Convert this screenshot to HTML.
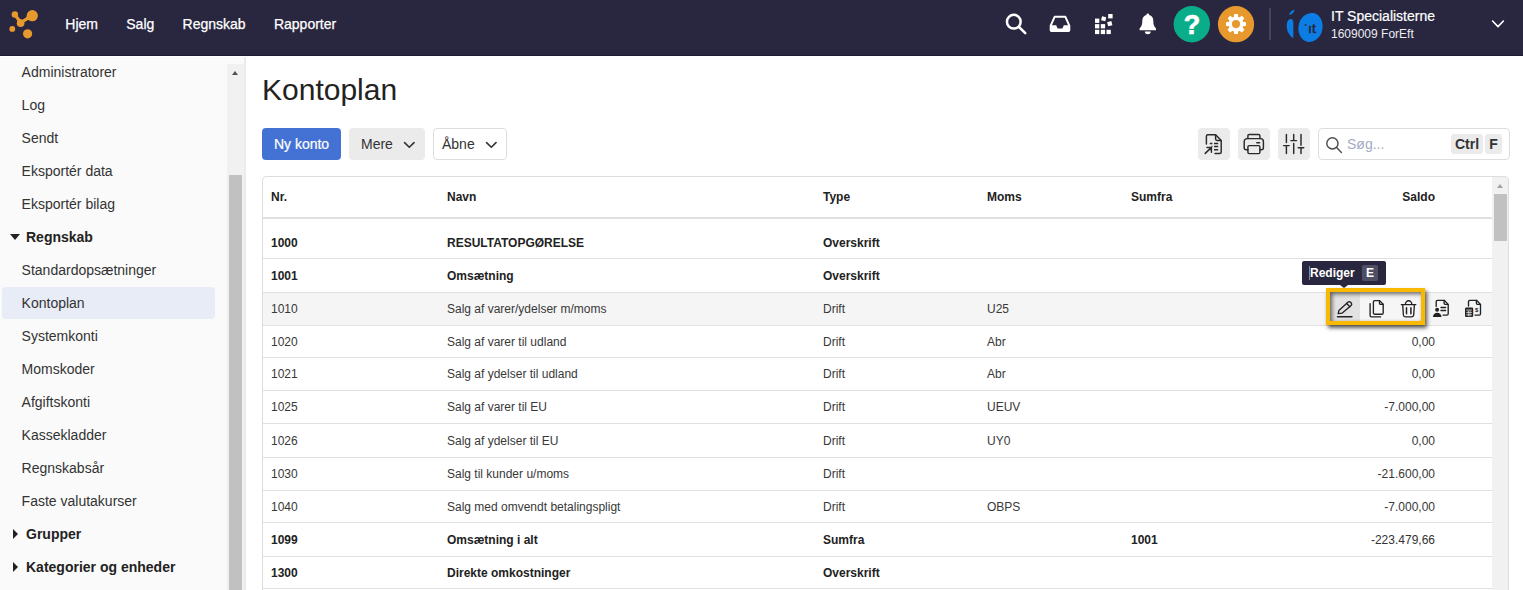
<!DOCTYPE html>
<html lang="da">
<head>
<meta charset="utf-8">
<title>Kontoplan</title>
<style>
*{box-sizing:border-box;margin:0;padding:0}
html,body{width:1523px;height:590px;overflow:hidden;background:#fff}
body{font-family:"Liberation Sans",Arial,sans-serif;font-size:14px;color:#333;position:relative}
.abs{position:absolute}
/* NAVBAR */
#nav{position:absolute;left:0;top:0;width:1523px;height:56px;background:#29273f;border-bottom:1px solid #1d1b30}
#nav .menu{position:absolute;top:0;left:51.2px;height:48px;display:flex}
#nav .menu a{color:#fff;font-size:14px;line-height:48px;padding:0 14.15px;text-decoration:none;-webkit-text-stroke:.25px #fff}
#nav svg{position:absolute}
.circ{position:absolute;width:36px;height:36px;border-radius:50%;top:6px}
.divider{position:absolute;left:1269px;top:8px;width:2px;height:32px;background:#454359}
.uname{position:absolute;left:1331px;top:8px;font-size:14px;line-height:16px;color:#fff;white-space:nowrap;-webkit-text-stroke:.2px #fff}
.usub{position:absolute;left:1331px;top:27px;font-size:12px;line-height:14px;color:#ececf1;white-space:nowrap}
/* SIDEBAR */
#side{position:absolute;left:0;top:57px;width:246px;height:533px;background:#fafafa;border-right:2px solid #ebebeb}
#side .track{position:absolute;left:227px;top:7px;width:17px;height:526px;background:#f1f1f1}
#side .thumb{position:absolute;left:229px;top:118px;width:13px;height:416px;background:#c1c1c1}
#side .it{margin-top:-1px;position:absolute;left:2px;width:213px;height:32px;line-height:32px;padding-left:19.6px;font-size:14px;color:#333;border-radius:4px;white-space:nowrap}
#side .it.b{font-weight:bold;color:#222;padding-left:24px}
#side .it.sel{background:#e8ecf6}
.tri{position:absolute;width:0;height:0}
/* MAIN */
h1{position:absolute;left:262px;top:73px;font-size:30px;font-weight:normal;line-height:34px;color:#222;white-space:nowrap}
.btn{position:absolute;top:128px;height:32px;border-radius:4px;font-size:14px;line-height:32px;white-space:nowrap;color:#333}
.ibtn{position:absolute;top:128px;width:32px;height:32px;border-radius:4px;background:#ebebeb}
.ibtn svg{position:absolute;left:4px;top:4px}
#search{position:absolute;left:1318px;top:128px;width:192px;height:32px;border:1px solid #ddd;border-radius:4px;background:#fff}
#search .ph{position:absolute;left:28px;top:0;line-height:30px;font-size:14px;color:#a3abc4}
kbd{position:absolute;font-family:inherit;font-weight:bold;font-size:14px;line-height:20px;height:20px;background:#ebebeb;border-radius:3px;color:#333;text-align:center}
/* TABLE */
#tbl{position:absolute;left:262px;top:176px;width:1247px;height:420px;border:1px solid #ddd;border-radius:4px;background:#fff;overflow:hidden}
.row{position:absolute;left:0;width:1229px;font-size:12px;color:#383838;border-bottom:1px solid #e0e0e0}
.row span{position:absolute;white-space:nowrap;line-height:14px}
.row.b{font-weight:bold;color:#222}
.row.hov{background:#f5f5f5}
.c1{left:8px}.c2{left:184px}.c3{left:560px}.c4{left:724px}.c5{left:868px}.c6{right:57px;text-align:right}
#hl{position:absolute;left:1326px;top:288px;width:99px;height:37px;background:#f9b900;box-shadow:2px 3px 4px rgba(0,0,0,.65)}
#hlin{position:absolute;left:1330px;top:292px;width:91px;height:29px;box-shadow:inset 2px 2px 4px rgba(0,0,0,.6)}
#tip{position:absolute;left:1302px;top:261px;width:84px;height:24px;border-radius:2px;background:#29273f;color:#fff;font-weight:bold;font-size:12px;line-height:24px;padding-left:8px;white-space:nowrap}
#tip i{position:absolute;left:7px;top:5px;width:1px;height:14px;background:rgba(255,255,255,.45)}
#tip span{position:absolute;left:60px;top:4px;width:16px;height:16px;line-height:16px;text-align:center;background:#504e64;border-radius:2px}
</style>
</head>
<body>
<div id="nav">
  <svg style="left:8px;top:8px" width="32" height="32" viewBox="8 8 32 32">
    <g fill="#e8992e">
      <circle cx="14.85" cy="14.5" r="3.2"/><circle cx="32.3" cy="15.7" r="5.6"/><circle cx="20.6" cy="23.3" r="3.8"/>
      <circle cx="12.3" cy="28.9" r="2.9"/><circle cx="27.6" cy="33.8" r="4.6"/>
      <path d="M14.85 14.5 L20.6 22.6 L32.3 15.7" fill="none" stroke="#e8992e" stroke-width="3.1" stroke-linejoin="round"/>
      <path d="M17.2 16.4 Q19 19 22 19.6 L20 21Z M24.5 19.5 Q26.5 18.5 27 15.5 L29 18Z"/>
    </g>
  </svg>
  <div class="menu"><a>Hjem</a><a>Salg</a><a>Regnskab</a><a>Rapporter</a></div>
  <!-- nav icons -->
  <svg style="left:1000px;top:0" width="270" height="56" viewBox="1000 0 270 56">
    <g fill="none" stroke="#fff" stroke-linecap="round">
      <circle cx="1013.8" cy="21.7" r="6.85" stroke-width="2.5"/><path d="M1019 27 L1025.3 33.2" stroke-width="2.5"/>
    </g>
    <!-- inbox -->
    <path d="M1054.6 16.8 H1065.4 L1069.3 25.6 V30 A1.1 1.1 0 0 1 1068.2 31.1 H1051.8 A1.1 1.1 0 0 1 1050.7 30 V25.6 Z" fill="none" stroke="#fff" stroke-width="2" stroke-linejoin="round"/>
    <path d="M1050.7 25.3 H1056.2 L1057.6 28.5 H1062.4 L1063.8 25.3 H1069.3 V31 H1050.7Z" fill="#fff"/>
    <!-- grid -->
    <g fill="#fff">
      <rect x="1095" y="18.6" width="4.3" height="4.3"/><rect x="1095" y="24.1" width="4.3" height="4.3"/><rect x="1095" y="29.8" width="4.3" height="4.3"/>
      <rect x="1100.8" y="24.1" width="4.3" height="4.3"/><rect x="1100.8" y="29.8" width="4.3" height="4.3"/>
      <rect x="1106.5" y="29.8" width="4.3" height="4.3"/>
      <rect x="1101.5" y="16.6" width="4.3" height="4.3" transform="rotate(14 1103.6 18.8)"/>
      <rect x="1108.2" y="14" width="4.4" height="4.4"/>
      <rect x="1107.6" y="21.6" width="4.3" height="4.3" transform="rotate(-15 1109.7 23.7)"/>
    </g>
    <!-- bell -->
    <g fill="#fff">
      <path d="M1147.8 13.4 C1148.7 13.4 1149.2 14 1149.2 15 C1151.8 15.7 1153.3 18 1153.3 20.8 C1153.3 25 1154.2 26.8 1156 28.4 V30.3 H1139.6 V28.4 C1141.4 26.8 1142.3 25 1142.3 20.8 C1142.3 18 1143.8 15.7 1146.4 15 C1146.4 14 1146.9 13.4 1147.8 13.4Z"/>
      <path d="M1144.9 31.6 H1150.7 A2.9 2.6 0 0 1 1144.9 31.6Z"/>
    </g>
    <circle cx="1191.8" cy="24.2" r="18.2" fill="#0aad8a"/>
    <text x="1191.9" y="34.2" font-size="27" font-weight="bold" text-anchor="middle" fill="#fff" stroke="#fff" stroke-width=".7" font-family="Liberation Sans, sans-serif">?</text>
    <circle cx="1236" cy="24.2" r="18.1" fill="#e8992e"/>
    <g fill="#fff" transform="translate(1236 24.1)"><circle r="7.7"/><g id="tt"><rect x="-2" y="-10" width="4" height="20" rx=".6"/></g><use href="#tt" transform="rotate(45)"/><use href="#tt" transform="rotate(90)"/><use href="#tt" transform="rotate(135)"/><circle r="4.05" fill="#e8992e"/></g>
  </svg>
  <div class="divider"></div>
  <!-- company logo -->
  <svg style="left:1284px;top:8px" width="42" height="36" viewBox="1284 8 42 36">
    <g fill="#0d7de6">
      <ellipse cx="1310.5" cy="27.4" rx="12" ry="14.6" transform="rotate(12 1310.5 27.4)"/>
      <path d="M1293.3 38.3 C1289.4 35.6 1286.7 31 1286.7 26 C1286.7 22 1288.4 19.3 1290.6 19.1 C1292.6 19.1 1293.3 20.8 1293.3 23Z"/>
      <path d="M1288.9 15.1 C1289.6 12.6 1291.6 10.6 1294.4 9.6 C1294.4 12.4 1292.4 14.4 1288.9 15.1Z"/>
    </g>
    <text x="1308" y="32.7" font-size="13" text-anchor="start" fill="#29273f" stroke="#29273f" stroke-width=".55" font-family="Liberation Sans, sans-serif" textLength="7.8" lengthAdjust="spacingAndGlyphs">ıt</text>
    <circle cx="1305.6" cy="24.9" r="0.95" fill="#29273f"/>
  </svg>
  <div class="uname">IT Specialisterne</div>
  <div class="usub">1609009 ForEft</div>
  <svg style="left:1491px;top:19px" width="14" height="10" viewBox="0 0 14 10" fill="none" stroke="#fff" stroke-width="1.6" stroke-linecap="round" stroke-linejoin="round"><path d="M1.6 2 L7 7.6 L12.4 2"/></svg>
</div>

<div id="side">
  <div class="track"></div><div class="thumb"></div>
  <div class="tri" style="left:231.8px;top:13.8px;border-left:3.7px solid transparent;border-right:3.7px solid transparent;border-bottom:4.3px solid #505050"></div>
  <div class="it" style="top:0px">Administratorer</div>
  <div class="it" style="top:33px">Log</div>
  <div class="it" style="top:66px">Sendt</div>
  <div class="it" style="top:99px">Eksportér data</div>
  <div class="it" style="top:132px">Eksportér bilag</div>
  <div class="it b" style="top:165px">Regnskab</div>
  <div class="tri" style="left:10.4px;top:177px;border-left:5.2px solid transparent;border-right:5.2px solid transparent;border-top:6.4px solid #222"></div>
  <div class="it" style="top:198px">Standardopsætninger</div>
  <div class="it sel" style="top:231px">Kontoplan</div>
  <div class="it" style="top:264px">Systemkonti</div>
  <div class="it" style="top:297px">Momskoder</div>
  <div class="it" style="top:330px">Afgiftskonti</div>
  <div class="it" style="top:363px">Kassekladder</div>
  <div class="it" style="top:396px">Regnskabsår</div>
  <div class="it" style="top:429px">Faste valutakurser</div>
  <div class="it b" style="top:462px">Grupper</div>
  <div class="tri" style="left:12.8px;top:472px;border-top:5px solid transparent;border-bottom:5px solid transparent;border-left:5.6px solid #222"></div>
  <div class="it b" style="top:495px">Kategorier og enheder</div>
  <div class="tri" style="left:12.8px;top:505px;border-top:5px solid transparent;border-bottom:5px solid transparent;border-left:5.6px solid #222"></div>
</div>

<h1>Kontoplan</h1>
<div class="btn" style="left:262px;width:79px;background:#4472d4;color:#fff;text-align:center;-webkit-text-stroke:.2px #fff">Ny konto</div>
<div class="btn" style="left:349px;width:76px;background:#ebebeb;padding-left:12px">Mere<svg class="abs" style="left:53.6px;top:12.6px" width="12.6" height="8.4" viewBox="0 0 12 8" fill="none" stroke="#333" stroke-width="1.5" stroke-linecap="round" stroke-linejoin="round"><path d="M1.5 1.5 L6 6 L10.5 1.5"/></svg></div>
<div class="btn" style="left:433px;width:74px;background:#fff;border:1px solid #ddd;line-height:30px;padding-left:8px">Åbne<svg class="abs" style="left:50.8px;top:11.6px" width="12.6" height="8.4" viewBox="0 0 12 8" fill="none" stroke="#333" stroke-width="1.5" stroke-linecap="round" stroke-linejoin="round"><path d="M1.5 1.5 L6 6 L10.5 1.5"/></svg></div>

<div class="ibtn" style="left:1198px"><svg class="abs" style="left:0;top:0" width="32" height="32" viewBox="0 0 32 32" fill="none" stroke="#2a2a2a" stroke-width="1.45" stroke-linecap="round" stroke-linejoin="round"><path d="M8.4 16 V8.2 A1.5 1.5 0 0 1 9.9 6.7 H17.6 L23.2 12.4 V24 A1.5 1.5 0 0 1 21.7 25.5 H17"/><path d="M17.6 6.9 V11 A1.4 1.4 0 0 0 19 12.4 H23"/><path d="M11.8 15.4 H14.4 M16 15.4 H20.2 M13.4 18.6 H14.4 M16 18.6 H20.2 M16 21.8 H20.2" stroke-width="1.5" stroke-linecap="butt"/><path d="M7.2 25.4 L13.3 19.6 M9 19.5 H13.4 V24.2"/></svg></div>
<div class="ibtn" style="left:1238px"><svg class="abs" style="left:0;top:0" width="32" height="32" viewBox="0 0 32 32" fill="none" stroke="#2a2a2a" stroke-width="1.45" stroke-linecap="round" stroke-linejoin="round"><path d="M9.9 10.6 V7.8 A1.4 1.4 0 0 1 11.3 6.4 H20.5 A1.4 1.4 0 0 1 21.9 7.8 V10.6"/><path d="M9.9 21.8 H8.2 A2 2 0 0 1 6.2 19.8 V13.4 A2.8 2.8 0 0 1 9 10.6 H22.6 A2.8 2.8 0 0 1 25.4 13.4 V19.8 A2 2 0 0 1 23.4 21.8 H21.9"/><rect x="9.9" y="17.6" width="12" height="8" rx="1.3"/><path d="M18.8 14.8 H21.6"/></svg></div>
<div class="ibtn" style="left:1278px"><svg class="abs" style="left:0;top:0" width="32" height="32" viewBox="0 0 32 32" fill="none" stroke="#2a2a2a" stroke-width="1.45" stroke-linecap="round"><path d="M8.4 6.4 V14.6 M5.6 17.6 H11.2 M8.4 17.6 V25.4"/><path d="M15.7 6.4 V12.6 M12.9 12.6 H18.5 M15.7 15.4 V25.4"/><path d="M23 6.4 V17.2 M20.2 19.8 H25.8 M23 19.8 V25.4"/></svg></div>
<div id="search">
  <svg class="abs" style="left:6.3px;top:7px" width="18" height="18" viewBox="0 0 18 18" fill="none" stroke="#4a4a4a" stroke-width="1.4" stroke-linecap="round"><circle cx="7.4" cy="7.4" r="5.6"/><path d="M11.6 11.6 L16.4 16.4"/></svg>
  <div class="ph">Søg...</div>
  <kbd style="left:132px;top:5px;width:32px">Ctrl</kbd>
  <kbd style="left:166px;top:5px;width:17px">F</kbd>
</div>

<div id="tbl">
  <div class="row b" style="top:0;height:42px;border-bottom:2px solid #e0e0e0"><span class="c1" style="top:13px">Nr.</span><span class="c2" style="top:13px">Navn</span><span class="c3" style="top:13px">Type</span><span class="c4" style="top:13px">Moms</span><span class="c5" style="top:13px">Sumfra</span><span class="c6" style="top:13px">Saldo</span></div>
  <div class="row b" style="top:42px;height:40px"><span class="c1" style="top:17px">1000</span><span class="c2" style="top:17px">RESULTATOPGØRELSE</span><span class="c3" style="top:17px">Overskrift</span></div>
  <div class="row b" style="top:82px;height:34px"><span class="c1" style="top:10px">1001</span><span class="c2" style="top:10px">Omsætning</span><span class="c3" style="top:10px">Overskrift</span></div>
  <div class="row hov" style="top:116px;height:33px"><span class="c1" style="top:9px">1010</span><span class="c2" style="top:9px">Salg af varer/ydelser m/moms</span><span class="c3" style="top:9px">Drift</span><span class="c4" style="top:9px">U25</span></div>
  <div class="row" style="top:149px;height:32px"><span class="c1" style="top:9px">1020</span><span class="c2" style="top:9px">Salg af varer til udland</span><span class="c3" style="top:9px">Drift</span><span class="c4" style="top:9px">Abr</span><span class="c6" style="top:9px">0,00</span></div>
  <div class="row" style="top:181px;height:33px"><span class="c1" style="top:9px">1021</span><span class="c2" style="top:9px">Salg af ydelser til udland</span><span class="c3" style="top:9px">Drift</span><span class="c4" style="top:9px">Abr</span><span class="c6" style="top:9px">0,00</span></div>
  <div class="row" style="top:214px;height:33px"><span class="c1" style="top:9px">1025</span><span class="c2" style="top:9px">Salg af varer til EU</span><span class="c3" style="top:9px">Drift</span><span class="c4" style="top:9px">UEUV</span><span class="c6" style="top:9px">-7.000,00</span></div>
  <div class="row" style="top:247px;height:34px"><span class="c1" style="top:10px">1026</span><span class="c2" style="top:10px">Salg af ydelser til EU</span><span class="c3" style="top:10px">Drift</span><span class="c4" style="top:10px">UY0</span><span class="c6" style="top:10px">0,00</span></div>
  <div class="row" style="top:281px;height:33px"><span class="c1" style="top:9px">1030</span><span class="c2" style="top:9px">Salg til kunder u/moms</span><span class="c3" style="top:9px">Drift</span><span class="c6" style="top:9px">-21.600,00</span></div>
  <div class="row" style="top:314px;height:32px"><span class="c1" style="top:9px">1040</span><span class="c2" style="top:9px">Salg med omvendt betalingspligt</span><span class="c3" style="top:9px">Drift</span><span class="c4" style="top:9px">OBPS</span><span class="c6" style="top:9px">-7.000,00</span></div>
  <div class="row b" style="top:346px;height:34px"><span class="c1" style="top:10px">1099</span><span class="c2" style="top:10px">Omsætning i alt</span><span class="c3" style="top:10px">Sumfra</span><span class="c5" style="top:10px">1001</span><span class="c6" style="top:10px;font-weight:normal;color:#333">-223.479,66</span></div>
  <div class="row b" style="top:380px;height:32px"><span class="c1" style="top:9px">1300</span><span class="c2" style="top:9px">Direkte omkostninger</span><span class="c3" style="top:9px">Overskrift</span></div>
  <!-- table scrollbar -->
  <div class="abs" style="left:1229px;top:0;width:17px;height:420px;background:#f1f1f1"></div>
  <div class="abs" style="left:1231px;top:17px;width:13px;height:47px;background:#c1c1c1"></div>
  <div class="tri" style="left:1233.8px;top:7px;border-left:3.8px solid transparent;border-right:3.8px solid transparent;border-bottom:4px solid #a3a3a3"></div>
</div>

<!-- row actions -->
<div id="hl"></div>
<div class="abs" style="left:1330px;top:292px;width:30px;height:29px;background:#e2e2e2"></div>
<div class="abs" style="left:1360px;top:292px;width:61px;height:29px;background:#f6f6f6"></div>
<div id="hlin"></div>
<svg class="abs" style="left:1328px;top:293px" width="160" height="32" viewBox="1328 293 160 32" fill="none" stroke="#222" stroke-width="1.35" stroke-linecap="round" stroke-linejoin="round">
  <!-- pencil -->
  <path d="M1337.4 316.7 H1352"/>
  <path d="M1338.2 313.6 L1338.9 310.4 L1347.9 302.2 A1.9 1.9 0 0 1 1350.6 302.3 L1351.2 303 A1.9 1.9 0 0 1 1351.1 305.6 L1342 313.2 Z"/>
  <path d="M1346.6 303.4 L1349.9 306.7"/>
  <!-- copy -->
  <path d="M1373.4 301.9 A1.3 1.3 0 0 1 1374.7 300.6 H1379.6 L1383.2 304.3 V312.9 A1.3 1.3 0 0 1 1381.9 314.2 H1374.7 A1.3 1.3 0 0 1 1373.4 312.9 Z"/>
  <path d="M1379.5 300.8 V303.2 A1.1 1.1 0 0 0 1380.6 304.3 H1383"/>
  <path d="M1370.1 303.6 V315.5 A1.3 1.3 0 0 0 1371.4 316.8 H1380.6"/>
  <!-- trash -->
  <path d="M1401.3 304.6 H1415.8"/>
  <path d="M1405.4 304.4 A3.2 3.6 0 0 1 1411.8 304.4"/>
  <path d="M1402.7 304.8 L1403.4 315 A1.9 1.9 0 0 0 1405.3 316.8 H1411.8 A1.9 1.9 0 0 0 1413.7 315 L1414.4 304.8"/>
  <path d="M1406.5 307.8 V313.8 M1410.9 307.8 V313.8" stroke-width="1.5"/>
  <!-- doc person -->
  <path d="M1436.2 306.4 V301.6 A1.3 1.3 0 0 1 1437.5 300.3 H1444.2 L1448.2 304.4 V313.8 A1.3 1.3 0 0 1 1446.9 315.1 H1443"/>
  <path d="M1444.1 300.5 V303.2 A1.1 1.1 0 0 0 1445.2 304.3 H1448"/>
  <path d="M1441 307.5 H1445.6 M1441 310.5 H1445.6" stroke-width="1.4"/>
  <circle cx="1437.1" cy="309.8" r="2" fill="#222" stroke="none"/>
  <path d="M1432.9 317.1 A4.3 4.4 0 0 1 1441.5 317.1 Z" fill="#222" stroke="none"/>
  <!-- doc calc -->
  <path d="M1468.5 306 V301.6 A1.3 1.3 0 0 1 1469.8 300.3 H1476.5 L1480.5 304.4 V313.8 A1.3 1.3 0 0 1 1479.2 315.1 H1475"/>
  <path d="M1476.4 300.5 V303.2 A1.1 1.1 0 0 0 1477.5 304.3 H1480.3"/>
  <rect x="1465" y="307.6" width="8.2" height="9.4" rx="1.2" fill="#222" stroke="none"/>
  <path d="M1466.6 310 H1471.6 M1466.6 312.4 H1471.6 M1466.6 314.8 H1471.6 M1468.3 311 V316 M1470 311 V316" stroke="#f5f5f5" stroke-width=".7"/>
  <text x="1476.6" y="312.2" font-size="6" font-weight="bold" text-anchor="middle" fill="#222" stroke="none" font-family="Liberation Sans, sans-serif">$</text>
</svg>
<!-- tooltip -->
<div id="tip">Rediger<span>E</span><i></i></div>
<div class="tri" style="left:1340px;top:285px;border-left:4.5px solid transparent;border-right:4.5px solid transparent;border-top:3.5px solid #29273f"></div>
</body>
</html>
